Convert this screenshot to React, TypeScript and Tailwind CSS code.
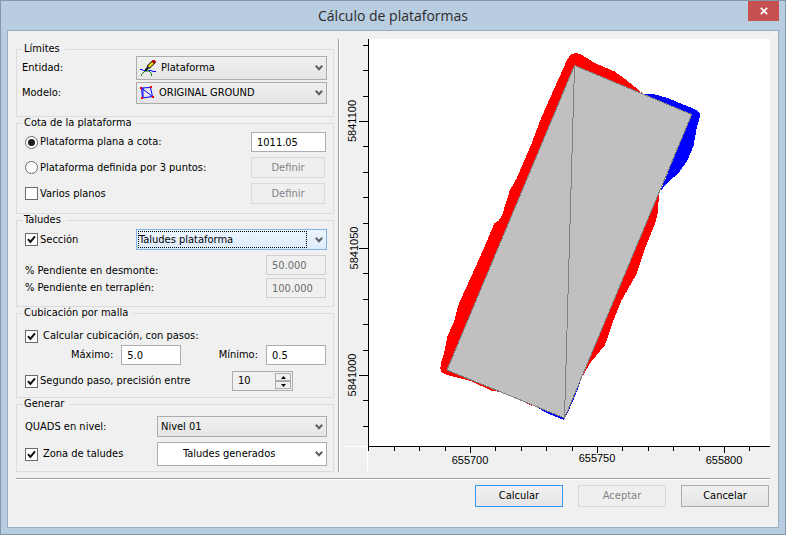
import type { InputHTMLAttributes, ReactNode } from "react";
import clsx from "clsx";

const X_TICKS = Array.from({ length: 16 }, (_, i) => i - 4);
const Y_TICKS = Array.from({ length: 16 }, (_, i) => i - 3);
const STEP = 25.4;

function Group({ title, className, children }: { title: string; className: string; children: ReactNode }) {
  return (
    <fieldset className="min-w-0 border border-[#dcdcdc]">
      <legend className="ml-[5px] pl-[2px] pr-[5px] leading-[10px]">{title}</legend>
      <div className={clsx("pr-[6px]", className)}>{children}</div>
    </fieldset>
  );
}

function Check({ type = "checkbox", label, gap = "gap-[2px]", ...rest }: {
  type?: "checkbox" | "radio";
  label: string;
  gap?: string;
} & InputHTMLAttributes<HTMLInputElement>) {
  return (
    <label className={clsx("flex items-center", gap)}>
      <span className="relative block size-[13px] shrink-0">
        <input
          type={type}
          className={clsx("peer block size-[13px] appearance-none border border-[#6a6a6a] bg-white", type === "radio" && "rounded-full")}
          {...rest}
        />
        {type === "radio" ? (
          <span className="pointer-events-none absolute inset-[3px] hidden rounded-full bg-[#1e1e1e] peer-checked:block" />
        ) : (
          <svg viewBox="0 0 13 13" className="pointer-events-none absolute inset-0 hidden peer-checked:block">
            <path d="M3 6.2 5.4 9 10 3.4" fill="none" stroke="#111" strokeWidth="2" />
          </svg>
        )}
      </span>
      {label}
    </label>
  );
}

function Combo({ id, label, value, className, selectClass, tone = "grey", children }: {
  id: string;
  label?: string;
  value: string;
  className: string;
  selectClass: string;
  tone?: "grey" | "white" | "focus";
  children?: ReactNode;
}) {
  return (
    <div className={clsx("relative shrink-0", className)}>
      <select
        id={id}
        aria-label={label}
        className={clsx(
          "block size-full appearance-none border",
          tone === "grey" && "border-[#acacac] bg-linear-to-b from-[#f0f0f0] to-[#e5e5e5]",
          tone === "white" && "border-[#acacac] bg-white",
          tone === "focus" && "border-[#7eb4ea] bg-linear-to-b from-[#ecf4fc] to-[#dcecfc]",
          selectClass,
        )}
      >
        <option>{value}</option>
      </select>
      {children}
      <svg viewBox="0 0 8 6" className="pointer-events-none absolute top-1/2 right-1 h-[6px] w-[8px] -translate-y-1/2">
        <path d="M0.8 0.8 4 4.2 7.2 0.8" fill="none" stroke="#606060" strokeWidth="2" />
      </svg>
    </div>
  );
}

function Field({ className, ...rest }: InputHTMLAttributes<HTMLInputElement>) {
  return (
    <input
      type="text"
      className={clsx(
        "mr-px h-5 min-w-0 shrink-0 border border-[#abadb3] bg-white pl-[5px] disabled:border-[#d0d0d0] disabled:bg-[#f0f0f0] disabled:text-[#6d6d6d]",
        className,
      )}
      {...rest}
    />
  );
}

function PushButton({ children, className, primary, disabled }: {
  children: ReactNode;
  className: string;
  primary?: boolean;
  disabled?: boolean;
}) {
  return (
    <button
      type="button"
      disabled={disabled}
      className={clsx(
        "shrink-0 border text-center disabled:border-[#d9d9d9] disabled:bg-[#efefef] disabled:text-[#838383]",
        !disabled && "bg-linear-to-b from-[#f0f0f0] to-[#e5e5e5]",
        primary ? "border-[#3399ff]" : "border-[#acacac]",
        className,
      )}
    >
      {children}
    </button>
  );
}

function PencilIcon() {
  return (
    <svg viewBox="0 0 16 16" className="pointer-events-none absolute top-[4px] left-[4px] size-4" fill="none">
      <path d="M0 9.5H2L3.5 10.5H6M8.5 10.5H11L13 11.5H16" stroke="#00f" />
      <path d="M1.5 16V14.5L5 11H9L11.5 13.5V16" stroke="#008000" />
      <path d="M8 7.5 14.5 1" stroke="#222" strokeWidth="4" />
      <path d="M8.8 6.8 13 2.6" stroke="#ffe800" strokeWidth="2.2" />
      <path d="M12.8 2.8 15 0.6" stroke="#c00000" strokeWidth="3" />
      <path d="M5.5 10.5 8 7.5" stroke="#000" strokeWidth="2" />
    </svg>
  );
}

function MeshIcon() {
  return (
    <svg viewBox="0 0 14 14" className="pointer-events-none absolute top-[4px] left-[4px] size-[14px]" fill="none">
      <path d="M1.5 2 10.5 1.5 12.5 10.5 2.5 12 1.5 2 12.5 10.5M3 2V12" stroke="#00f" />
      <path d="M0 1h2v2H0zM10 0h2v2h-2zM12 10h2v2h-2zM1 11h2v2H1z" fill="#f00" />
    </svg>
  );
}

function PlatformPlot() {
  return (
    <svg viewBox="0 0 426 432" className="block h-auto w-full" role="img" aria-label="Plataforma">
      <rect x="24" width="402" height="407" fill="#fff" />
      <path d="M0 407.5H23.5V432" fill="none" stroke="#fff" />

      <g shapeRendering="crispEdges">
        {/* cut slopes */}
        <g fill="#f00">
          <path d="M230 27 298.7 54.3 281 40 271 32.7 249.3 23.3 243.7 19.5 237.7 16 234 14.3H230L226 16 222.7 21.7 209.3 51.7 197.7 77.7 187.7 104.3 172.7 139.3 166 151 162.7 161 158.3 176 154.3 182 150.3 184.3 142.7 202.7 134.3 221.7 114.3 266 110 282.7 103.3 297.7 100.3 313.3 97.7 321 96.3 329.3 97.7 333.7 104.3 336.3 126 341.7 147.7 351.7 156 353 103 331Z" />
          <path d="M174.3 360 187.7 367 189 365 174.3 359Z" />
          <path d="M315.3 152 313.7 174.3 311.7 182.7 301 209.3 292 236 277.7 261 267.7 286 261 306 246 324.3 238.5 337.5Z" />
        </g>
        {/* fill slopes */}
        <g fill="#00f">
          <path d="M299 55 309.3 55 324.3 59.3 351 70.3 355.7 73.7V78.3L352.7 89.3 349.3 107.7 342.7 122.7 334.3 134.3 322.7 144.3 316 153 347.7 75.5Z" />
          <path d="M157 352.5 173 360.5 173 359 157 352Z" />
          <path d="M189 366 203 374.3 220 381 222.7 376 231.5 356 237 341 221 378Z" />
        </g>
        <path d="M230.5 26.5 347.7 75.5 220.5 379 103 331Z" fill="#c0c0c0" stroke="#808080" />
        <path d="M230.5 26.5 220.5 379" stroke="#808080" />
      </g>

      <g stroke="#000" shapeRendering="crispEdges">
        <path d="M24.5 0V407.5H426" fill="none" />
        {X_TICKS.map((n) => (
          <line key={n} x1={126.5 + n * STEP} x2={126.5 + n * STEP} y1="407" y2={n % 5 === 0 ? 414 : 412} />
        ))}
        {Y_TICKS.map((n) => (
          <line key={n} x1={n % 5 === 0 ? 15 : 19} x2="24" y1={82.5 + n * STEP} y2={82.5 + n * STEP} />
        ))}
      </g>

      <g className="font-['Liberation_Sans',sans-serif] text-[11px]" textAnchor="middle">
        <text x="126" y="425">655700</text>
        <text x="253" y="423">655750</text>
        <text x="380" y="425">655800</text>
        <text transform="translate(12 82) rotate(-90)">5841100</text>
        <text transform="translate(14 209) rotate(-90)">5841050</text>
        <text transform="translate(12 336) rotate(-90)">5841000</text>
      </g>
    </svg>
  );
}

export default function App() {
  return (
    <div className="flex min-h-screen flex-col border border-[#8497ab] bg-[#b9cde1] px-[6px] pb-[6px] font-['DejaVu_Sans_Condensed','DejaVu_Sans',sans-serif] text-[11px] leading-[14px] text-black">
      <header className="flex h-[29px] items-start">
        <span className="w-[31px]" />
        <h1 className="flex-1 text-center font-['Open_Sans',sans-serif] text-[14px] leading-[29px] text-[#2b2b2b]">Cálculo de plataformas</h1>
        <button type="button" aria-label="Cerrar" className="flex h-5 w-[31px] items-center justify-center bg-[#c75050]">
          <svg viewBox="0 0 8 8" className="size-2">
            <path d="M0.8 0.8 7.2 7.2M7.2 0.8 0.8 7.2" stroke="#fff" strokeWidth="1.8" />
          </svg>
        </button>
      </header>

      <main className="flex-1 border border-[#9aacc0] bg-[#f0f0f0] p-2">
        <div className="flex gap-1">
          <form className="flex w-[318px] shrink-0 flex-col gap-px pt-[5px]">
            <Group title="Límites" className="flex flex-col gap-[2px] pt-[2px] pb-3 pl-[5px]">
              <div className="flex items-center justify-between">
                <label htmlFor="entidad">Entidad:</label>
                <Combo id="entidad" value="Plataforma" className="h-6 w-[191px]" selectClass="pl-6">
                  <PencilIcon />
                </Combo>
              </div>
              <div className="flex items-center justify-between">
                <label htmlFor="modelo">Modelo:</label>
                <Combo id="modelo" value="ORIGINAL GROUND" className="h-[22px] w-[191px]" selectClass="pl-[22px]">
                  <MeshIcon />
                </Combo>
              </div>
            </Group>

            <Group title="Cota de la plataforma" className="flex flex-col gap-[5px] pt-1 pb-[9px] pl-2">
              <div className="flex items-center justify-between">
                <Check type="radio" name="cota" label="Plataforma plana a cota:" defaultChecked />
                <Field aria-label="Cota" defaultValue="1011.05" className="w-[75px]" />
              </div>
              <div className="flex items-center justify-between">
                <Check type="radio" name="cota" label="Plataforma definida por 3 puntos:" />
                <PushButton disabled className="mr-[2px] h-[21px] w-[74px]">Definir</PushButton>
              </div>
              <div className="flex items-center justify-between">
                <Check label="Varios planos" />
                <PushButton disabled className="mr-[2px] h-[21px] w-[74px]">Definir</PushButton>
              </div>
            </Group>

            <Group title="Taludes" className="pt-1 pb-2 pl-2">
              <div className="flex items-center justify-between">
                <Check label="Sección" defaultChecked />
                <Combo id="seccion" label="Sección" value="Taludes plataforma" className="h-[21px] w-[191px]" selectClass="pl-[2px]" tone="focus">
                  <span className="pointer-events-none absolute inset-y-[2px] right-5 left-[2px] border border-dotted border-black" />
                </Combo>
              </div>
              <div className="flex items-center justify-between pt-[5px]">
                <div className="flex flex-col pt-1 leading-[17px]">
                  <label htmlFor="desmonte">% Pendiente en desmonte:</label>
                  <label htmlFor="terraplen">% Pendiente en terraplén:</label>
                </div>
                <div className="flex flex-col gap-[3px]">
                  <Field id="desmonte" disabled defaultValue="50.000" className="w-[60px]" />
                  <Field id="terraplen" disabled defaultValue="100.000" className="w-[60px]" />
                </div>
              </div>
            </Group>

            <Group title="Cubicación por malla" className="pt-[11px] pb-[6px] pl-2">
              <Check label="Calcular cubicación, con pasos:" gap="gap-[5px]" defaultChecked />
              <div className="flex items-center justify-between pt-[2px] pl-[46px]">
                <div className="flex items-center gap-2">
                  <label htmlFor="maximo">Máximo:</label>
                  <Field id="maximo" defaultValue="5.0" className="w-[60px]" />
                </div>
                <div className="flex items-center gap-2">
                  <label htmlFor="minimo">Mínimo:</label>
                  <Field id="minimo" defaultValue="0.5" className="w-[60px]" />
                </div>
              </div>
              <div className="flex items-center justify-between pt-[6px] pr-[34px]">
                <Check label="Segundo paso, precisión entre" defaultChecked />
                <div className="flex h-5 w-[61px] border border-[#abadb3] p-px">
                  <input type="text" aria-label="Precisión" defaultValue="10" className="w-full min-w-0 bg-transparent pl-1" />
                  <div className="flex w-4 shrink-0 flex-col">
                    <button type="button" aria-label="Más" className="flex flex-1 items-center justify-center border border-[#acacac] bg-[#f0f0f0]">
                      <svg viewBox="0 0 5 3" className="h-[3px] w-[5px]"><path d="M0 3 2.5 0 5 3Z" /></svg>
                    </button>
                    <button type="button" aria-label="Menos" className="flex flex-1 items-center justify-center border border-[#acacac] bg-[#f0f0f0]">
                      <svg viewBox="0 0 5 3" className="h-[3px] w-[5px]"><path d="M0 0 2.5 3 5 0Z" /></svg>
                    </button>
                  </div>
                </div>
              </div>
            </Group>

            <Group title="Generar" className="flex flex-col gap-[5px] pt-[7px] pb-[5px] pl-2">
              <div className="flex items-center justify-between">
                <label htmlFor="nivel">QUADS en nivel:</label>
                <Combo id="nivel" value="Nivel 01" className="h-[21px] w-[170px]" selectClass="pl-[3px]" />
              </div>
              <div className="flex items-center justify-between">
                <Check label="Zona de taludes" gap="gap-[5px]" defaultChecked />
                <Combo id="zona" label="Zona de taludes" value="Taludes generados" className="h-6 w-[170px]" selectClass="pl-[25px]" tone="white" />
              </div>
            </Group>
          </form>

          <div className="w-[2px] shrink-0 border-l border-[#a0a0a0] bg-white" />
          <div className="min-w-0 flex-1">
            <PlatformPlot />
          </div>
        </div>

        <div className="mt-[6px] h-[2px] border-t border-[#a0a0a0] bg-white" />
        <footer className="flex justify-end gap-[15px] pt-[5px] pr-px">
          <PushButton primary className="h-[22px] w-[88px]">Calcular</PushButton>
          <PushButton disabled className="h-[22px] w-[88px]">Aceptar</PushButton>
          <PushButton className="h-[22px] w-[88px]">Cancelar</PushButton>
        </footer>
      </main>
    </div>
  );
}
